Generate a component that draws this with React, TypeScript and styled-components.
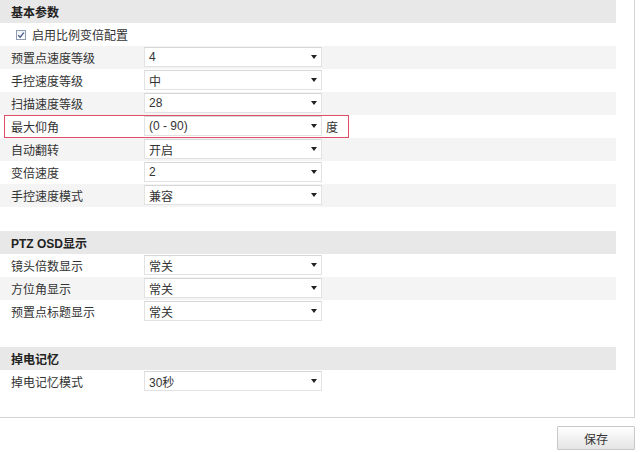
import React from "react";
import styled, { createGlobalStyle } from "styled-components";

const Global = createGlobalStyle`
  html, body { margin: 0; padding: 0; background: #fff; }
  body { font-family: "Liberation Sans", "Noto Sans CJK SC", sans-serif; font-size: 12px; color: #333; }
`;

const Page = styled.div`
  width: 635px;
  display: flex;
  flex-direction: column;
  align-items: stretch;
`;

const Panel = styled.div`
  border-right: 1px solid #d4d4d4;
  border-bottom: 1px solid #d4d4d4;
  padding-bottom: 24px;
  display: flex;
  flex-direction: column;
  gap: 24px;
`;

const Section = styled.div`
  width: 616px;
  display: flex;
  flex-direction: column;
`;

const Header = styled.div`
  height: 23px;
  background: #e8e8e8;
  display: flex;
  align-items: center;
  padding-left: 11px;
  font-weight: bold;
  font-size: 12px;
  color: #222;
`;

const Row = styled.div<{ $alt: boolean }>`
  height: 23px;
  background: ${(p) => (p.$alt ? "#f4f4f4" : "#fff")};
  display: flex;
  align-items: flex-start;
`;

const RowInner = styled.div<{ $hl?: boolean }>`
  box-sizing: border-box;
  margin-left: 4px;
  height: 23px;
  border: 1px solid ${(p) => (p.$hl ? "#dc4f66" : "transparent")};
  background: ${(p) => (p.$hl ? "#fff" : "transparent")};
  width: ${(p) => (p.$hl ? "345px" : "auto")};
  padding-left: 6px;
  display: flex;
  align-items: center;
`;

const Label = styled.div`
  width: 133px;
  color: #333;
  white-space: nowrap;
`;

const SelectBox = styled.div`
  box-sizing: border-box;
  width: 178px;
  height: 20px;
  margin-top: -1px;
  background: #fff;
  border: 1px solid #e2e2e2;
  border-top-color: #d6d6d6;
  display: flex;
  align-items: center;
  padding-left: 4px;
  color: #333;
  position: relative;
`;

const Arrow = styled.span`
  position: absolute;
  right: 4px;
  top: 7px;
  width: 0;
  height: 0;
  border-left: 3.5px solid transparent;
  border-right: 3.5px solid transparent;
  border-top: 4px solid #222;
`;

const Unit = styled.span`
  margin-left: 4px;
  color: #333;
`;

const CheckRow = styled.label`
  display: flex;
  align-items: center;
  padding-left: 16px;
  gap: 6px;
  height: 23px;
  color: #333;
`;

const CheckBox = styled.span`
  box-sizing: border-box;
  width: 10px;
  height: 10px;
  border: 1px solid #8f9bb0;
  background: linear-gradient(#eef1f6, #fff);
  display: inline-flex;
  align-items: center;
  justify-content: center;
`;

const Footer = styled.div`
  display: flex;
  justify-content: flex-end;
  padding-top: 8px;
`;

const Button = styled.button`
  width: 78px;
  height: 24px;
  border: 1px solid #c8c8c8;
  border-radius: 1px;
  background: linear-gradient(#ffffff, #e4e4e4);
  font-family: "Liberation Sans", "Noto Sans CJK SC", sans-serif;
  font-size: 12px;
  color: #333;
  padding: 0;
`;

type Field = { label: string; value: string; unit?: string; hl?: boolean };

const basic: Field[] = [
  { label: "预置点速度等级", value: "4" },
  { label: "手控速度等级", value: "中" },
  { label: "扫描速度等级", value: "28" },
  { label: "最大仰角", value: "(0 - 90)", unit: "度", hl: true },
  { label: "自动翻转", value: "开启" },
  { label: "变倍速度", value: "2" },
  { label: "手控速度模式", value: "兼容" },
];

const osd: Field[] = [
  { label: "镜头倍数显示", value: "常关" },
  { label: "方位角显示", value: "常关" },
  { label: "预置点标题显示", value: "常关" },
];

const mem: Field[] = [{ label: "掉电记忆模式", value: "30秒" }];

function FieldRow({ f, alt }: { f: Field; alt: boolean }) {
  return (
    <Row $alt={alt}>
      <RowInner $hl={f.hl}>
        <Label>{f.label}</Label>
        <SelectBox>
          {f.value}
          <Arrow />
        </SelectBox>
        {f.unit && <Unit>{f.unit}</Unit>}
      </RowInner>
    </Row>
  );
}

export default function App() {
  return (
    <Page>
      <Global />
      <Panel>
        <Section>
          <Header>基本参数</Header>
          <CheckRow>
            <CheckBox>
              <svg width="8" height="8" viewBox="0 0 8 8">
                <path d="M1.2 4.2 L3.2 6.2 L6.8 1.6" fill="none" stroke="#4a5a8a" strokeWidth="1.3" />
              </svg>
            </CheckBox>
            启用比例变倍配置
          </CheckRow>
          {basic.map((f, i) => (
            <FieldRow key={f.label} f={f} alt={i % 2 === 0} />
          ))}
        </Section>
        <Section>
          <Header>PTZ OSD显示</Header>
          {osd.map((f, i) => (
            <FieldRow key={f.label} f={f} alt={i % 2 === 1} />
          ))}
        </Section>
        <Section>
          <Header>掉电记忆</Header>
          {mem.map((f, i) => (
            <FieldRow key={f.label} f={f} alt={i % 2 === 1} />
          ))}
        </Section>
      </Panel>
      <Footer>
        <Button>保存</Button>
      </Footer>
    </Page>
  );
}
